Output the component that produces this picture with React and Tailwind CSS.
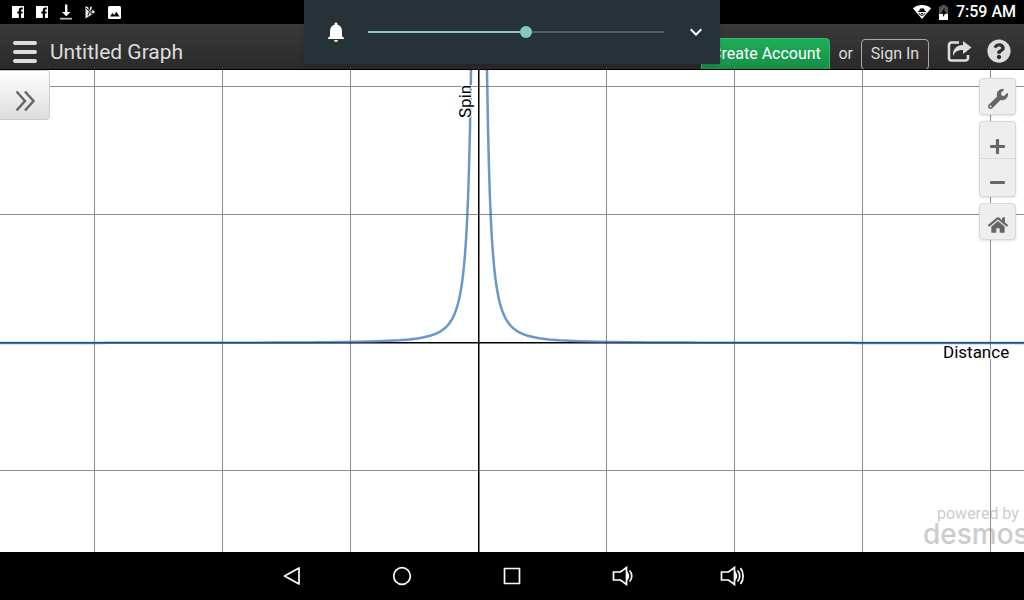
import React, { useState } from 'react';
import { FaWrench, FaHome, FaPlus, FaMinus, FaQuestionCircle } from 'react-icons/fa';
import { MdNotifications, MdKeyboardArrowDown } from 'react-icons/md';

const ORIGIN = { x: 479, y: 273 };
const GRID_X = [94, 222, 350, 606, 734, 862, 990];
const GRID_Y = [16, 144, 400];

// y = k / x^2 on one side of the y axis
function branch(side) {
  const points = [];
  for (let d = 7; d <= 560; d += d < 60 ? 1 : 10) {
    points.push(`${ORIGIN.x + side * d},${(ORIGIN.y - 17400 / (d * d)).toFixed(2)}`);
  }
  return points.join(' ');
}

function FacebookIcon() {
  return (
    <svg viewBox="0 0 12 12" className="w-3 h-3">
      <path fill="#fff" fillRule="evenodd" d="M0 0h12v12H9V7.5h1.6V5.6H9V4.3c0-.6.3-.8.8-.8h1V1.6H9.2C7.6 1.6 6.8 2.6 6.8 4v1.6H5.3v1.9h1.5V12H0z" />
    </svg>
  );
}

function StatusBar() {
  return (
    <div className="h-6 shrink-0 bg-black flex items-center justify-between pl-3 pr-2 text-white">
      <div className="flex items-center gap-3">
        <FacebookIcon />
        <FacebookIcon />
        <svg viewBox="0 0 12 16" className="w-3 h-4">
          <path d="M5 .5h2.400V8H10.500L6.200 12.200 2 8h3z" fill="#fff" />
          <path d="M0 13.800h12v1.800H0z" fill="#bbb" />
        </svg>
        <svg viewBox="0 0 12 14" className="w-3 h-3.5">
          <path fill="#eee" d="M1.500 3.500L11 7.500l-9.500 6z" />
          <path fill="#eee" d="M1.500 1l3 1.500V5l-3-1zM6.500 1.500l1.500.5-1 3.500-1.500-.5zM8 4.500l3 2-2 1z" />
          <path stroke="#000" strokeWidth="1" fill="none" d="M2 3l4 4M4 10.500l1.500-4M7 5v3.500l3 .5" />
        </svg>
        <svg viewBox="0 0 13 13" className="w-[13px] h-[13px]">
          <rect width="13" height="13" rx="1.5" fill="#fff" />
          <path fill="#000" d="M2 10.500l2.500-3.400L6 9l2.500-3.300 3 4.800z" />
        </svg>
      </div>
      <div className="flex items-center gap-2">
        <svg viewBox="0 0 18 14" className="w-[18px] h-3.5">
          <path fill="#fff" d="M0 3.400C5-1 13-1 18 3.400L9 14z" />
          <path fill="#000" d="M7 3.500h4l.8 2.500h1v1H5.200V6h1z" />
          <path stroke="#000" fill="none" d="M6 8c.5 3 5.500 3 6 0M8 8.500h2" />
        </svg>
        <svg viewBox="0 0 9 15" className="w-[9px] h-[15px]">
          <path fill="#555" d="M2.500 0h4v1.500H9V9H0V1.500h2.500z" />
          <path fill="#fff" d="M0 9h9v6H0z" />
          <path fill="#000" d="M5.500 2.500L2 8.500h2V12l3.500-5.500h-2z" />
        </svg>
        <span className="text-base leading-6 font-medium">7:59 AM</span>
      </div>
    </div>
  );
}

function Header() {
  return (
    <header className="h-[46px] shrink-0 overflow-hidden flex items-start justify-between px-[13px] border-b border-black bg-linear-to-b from-[#3a3a3a] to-[#2a2a2a] text-[#ddd]">
      <div className="flex items-center gap-[13px] pt-3">
        <button aria-label="Menu" className="w-6 h-8 pb-px flex flex-col justify-center gap-[5px]">
          <span className="h-1 w-full rounded-sm bg-[#ddd]" />
          <span className="h-1 w-full rounded-sm bg-[#ddd]" />
          <span className="h-1 w-full rounded-sm bg-[#ddd]" />
        </button>
        <h1 className="text-[21px] leading-8">Untitled Graph</h1>
      </div>
      <div className="flex items-start gap-2 text-base">
        <button className="mt-3.5 h-9 w-[129px] pb-1 rounded-sm border border-[#2dbb68] bg-linear-to-b from-[#1eae59] to-[#168a45] text-white">
          Create Account
        </button>
        <span className="mt-3.5 leading-8">or</span>
        <button className="mt-[15px] h-[31px] w-[68px] pb-px rounded-sm border border-[#aaa]">Sign In</button>
        <button aria-label="Share" className="mt-4 ml-2.5">
          <svg viewBox="0 0 25 22" className="w-[25px] h-[22px]">
            <path d="M12 2.500H4.500a2.500 2.500 0 0 0-2.500 2.500v13a2.500 2.500 0 0 0 2.500 2.500h14a2.500 2.500 0 0 0 2.500-2.500V15" fill="none" stroke="#ddd" strokeWidth="2.600" />
            <path d="M16 1l8.500 6.500L16 14v-4C11 10 8 11.500 6 16 5.500 9 9.500 5 16 5z" fill="#ddd" />
          </svg>
        </button>
        <button aria-label="Help" className="mt-[15px] ml-[7px]">
          <FaQuestionCircle className="w-6 h-6" />
        </button>
      </div>
    </header>
  );
}

function VolumePanel() {
  const [volume, setVolume] = useState(53.5);
  return (
    <div className="absolute top-0 left-1/2 -translate-x-1/2 w-[416px] h-16 pl-5 pr-3 flex items-center bg-[#263238] text-white shadow-md">
      <MdNotifications className="w-6 h-6" />
      <input
        type="range"
        aria-label="Notification volume"
        min="0"
        max="100"
        step="0.5"
        value={volume}
        onChange={(e) => setVolume(Number(e.target.value))}
        className="flex-1 min-w-0 mx-5 h-3 appearance-none bg-no-repeat bg-center bg-[length:100%_2px] [&::-webkit-slider-thumb]:appearance-none [&::-webkit-slider-thumb]:w-3 [&::-webkit-slider-thumb]:h-3 [&::-webkit-slider-thumb]:rounded-full [&::-webkit-slider-thumb]:bg-[#80cbc4]"
        style={{ backgroundImage: `linear-gradient(to right, #80cbc4 ${volume}%, #515b60 ${volume}%)` }}
      />
      <button aria-label="Expand">
        <MdKeyboardArrowDown className="w-6 h-6" />
      </button>
    </div>
  );
}

function Graph() {
  return (
    <svg viewBox="0 0 1024 482" preserveAspectRatio="xMidYMid slice" className="w-full h-full">
      <g fill="#8c8c8c">
        {GRID_X.map((x) => <rect key={x} x={x} y="0" width="1" height="482" />)}
        {GRID_Y.map((y) => <rect key={y} x="0" y={y} width="1024" height="1" />)}
      </g>
      <g fill="#000">
        <rect x="478" y="0" width="1.500" height="482" />
        <rect x="0" y="272" width="1024" height="1.500" />
      </g>
      <g fill="none" stroke="#2d70b3" strokeOpacity="0.720" strokeWidth="2.500">
        <polyline points={branch(-1)} />
        <polyline points={branch(1)} />
      </g>
      <g fontSize="17" fill="#000" stroke="#fff" strokeWidth="2" paintOrder="stroke">
        <text x="943" y="288">Distance</text>
        <text transform="translate(471 48) rotate(-90)">Spin</text>
      </g>
    </svg>
  );
}

function GraphTools() {
  return (
    <div className="absolute top-2 right-2 w-[37px] flex flex-col gap-1.5 text-[#666]">
      <button aria-label="Graph settings" className="h-[37px] pt-1 flex items-center justify-center rounded-sm border border-[#d8d8d8] bg-[#eee] shadow-sm">
        <FaWrench className="w-5 h-5" />
      </button>
      <div className="h-[76px] flex flex-col rounded-sm border border-[#d8d8d8] bg-[#eee] shadow-sm">
        <button aria-label="Zoom in" className="h-[37px] pt-3 flex items-center justify-center border-b border-[#d8d8d8]">
          <FaPlus className="w-[17px] h-[17px]" />
        </button>
        <button aria-label="Zoom out" className="h-[37px] pt-2.5 flex items-center justify-center">
          <FaMinus className="w-[17px] h-[17px]" />
        </button>
      </div>
      <button aria-label="Default view" className="h-[37px] pt-1.5 flex items-center justify-center rounded-sm border border-[#d8d8d8] bg-[#eee] shadow-sm">
        <FaHome className="w-5 h-5" />
      </button>
    </div>
  );
}

function Speaker({ loud }) {
  return (
    <svg viewBox={loud ? '0 0 24 20' : '-2 0 24 20'} className="w-6 h-5" fill="none" stroke="#fff" strokeWidth="1.700">
      <path d="M1.500 6h7L14.500 1.500v17L8.500 14h-7z" />
      <path d="M15 6.500c1.600 2 1.600 5 0 7z" fill="#fff" />
      <path d="M17.500 4.500c3 3 3 8 0 11" />
      {loud && <path d="M20.500 2c3.500 4.500 3.500 11.500 0 16" />}
    </svg>
  );
}

function NavBar() {
  return (
    <nav className="h-12 shrink-0 bg-black flex items-center justify-center gap-[86px]">
      <button aria-label="Back">
        <svg viewBox="0 0 24 20" className="w-6 h-5" fill="none" stroke="#fff" strokeWidth="1.700" strokeLinejoin="round">
          <path d="M19 2v16L4.500 10z" />
        </svg>
      </button>
      <button aria-label="Home">
        <svg viewBox="0 0 24 20" className="w-6 h-5" fill="none" stroke="#fff" strokeWidth="1.700">
          <circle cx="12" cy="10" r="8.300" />
        </svg>
      </button>
      <button aria-label="Recent apps">
        <svg viewBox="0 0 24 20" className="w-6 h-5" fill="none" stroke="#fff" strokeWidth="1.700" strokeLinejoin="round">
          <rect x="4.500" y="2.500" width="15" height="15" />
        </svg>
      </button>
      <button aria-label="Volume down"><Speaker /></button>
      <button aria-label="Volume up"><Speaker loud /></button>
    </nav>
  );
}

export default function App() {
  return (
    <div className="relative h-screen flex flex-col overflow-hidden bg-white font-[Roboto,sans-serif]">
      <StatusBar />
      <Header />
      <main className="relative isolate flex-1 min-h-0 overflow-hidden">
        <Graph />
        <button aria-label="Show expression list" className="absolute top-0 left-0 w-[50px] h-[50px] pt-3 flex items-center justify-center rounded-r-sm border border-l-0 border-[#ccc] bg-linear-to-b from-white to-[#ddd]">
          <svg viewBox="0 0 20 22" className="w-5 h-[22px]" fill="none" stroke="#666" strokeWidth="2.500">
            <path d="M1.500 1.500l8.500 9.500-8.500 9.500M10 1.500l8.500 9.500-8.500 9.500" />
          </svg>
        </button>
        <GraphTools />
        {/* sits under the grid lines */}
        <div className="absolute -z-10 bottom-2 left-[calc(100%-101px)] text-[#ccc]">
          <div className="text-base leading-5 pl-3.5">powered by</div>
          <div className="text-[28px] leading-5 font-[Inter,sans-serif] font-medium">desmos</div>
        </div>
      </main>
      <VolumePanel />
      <NavBar />
    </div>
  );
}
